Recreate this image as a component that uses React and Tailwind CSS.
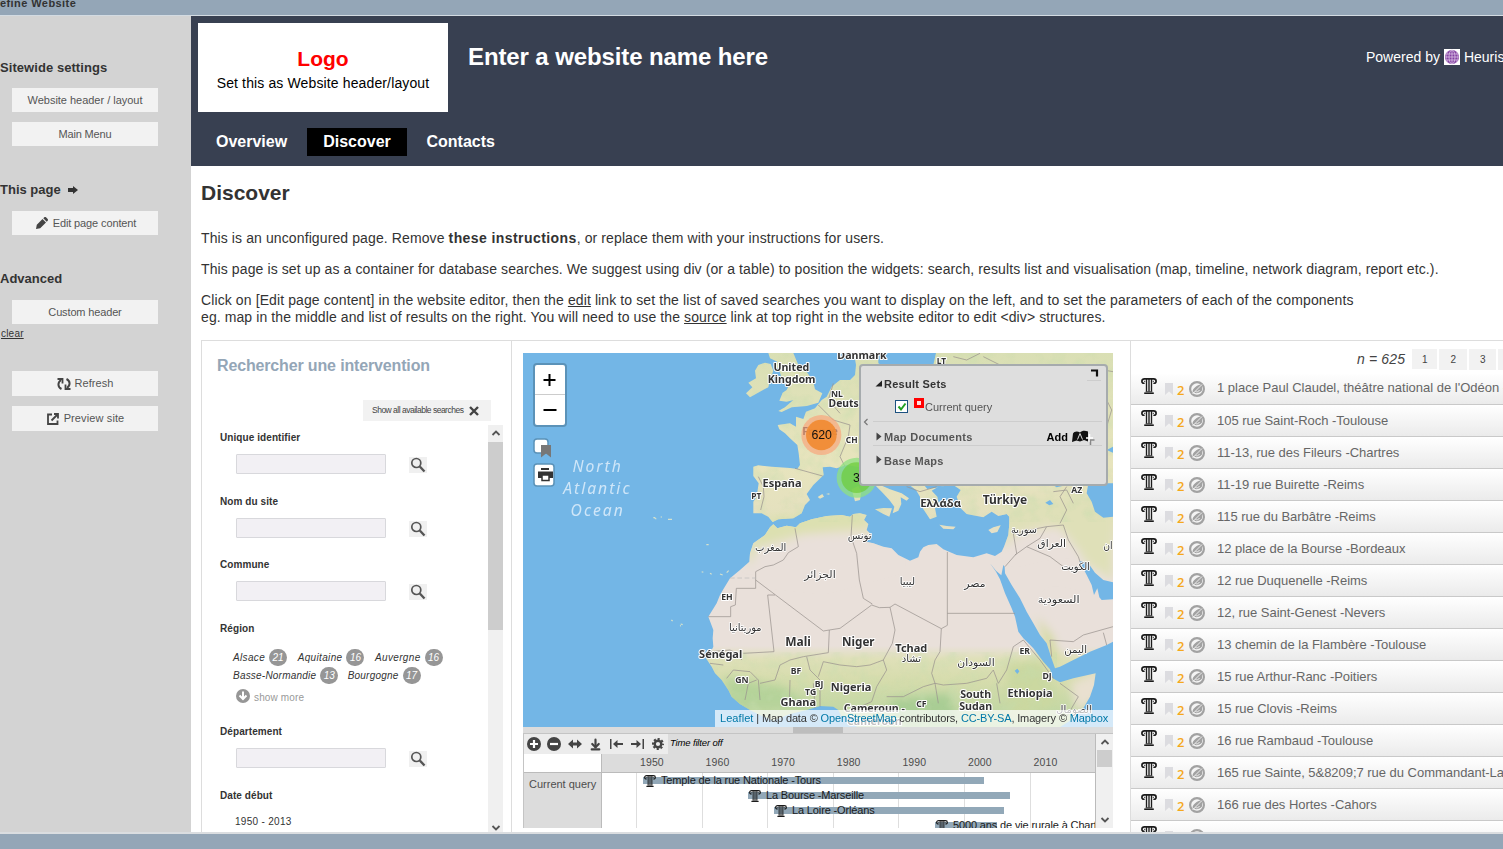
import React from "react";
import { LuArrowDownToLine } from "react-icons/lu";

/* ---------- icons ---------- */

function ColumnIcon({ className = "" }) {
  return (
    <svg viewBox="0 0 16 16" className={className} fill="none" stroke="#1c1c1c">
      <path d="M3.500 5C2.200 5.700.9 4.800.9 3.300.9 1.700 2 .9 3.400.9H12.600c1.400 0 2.500.8 2.500 2.400 0 1.500-1.300 2.400-2.600 1.700" strokeWidth="1.700" />
      <path d="M3.300 3.300h.9M11.800 3.300h.9" strokeWidth="1.200" />
      <path d="M5.500 1v12.500M8 1v12.500M10.500 1v12.500" strokeWidth="1.350" />
      <path d="M3.200 15.200h9.600" strokeWidth="1.600" />
      <path d="M4.700 13.700h6.600" strokeWidth=".8" />
    </svg>
  );
}

function SearchIcon() {
  return (
    <svg viewBox="0 0 16 16" className="h-4 w-4" fill="none" stroke="#555">
      <circle cx="6.300" cy="6" r="4.500" strokeWidth="1.700" />
      <path d="M9.800 9.500l4.700 5" strokeWidth="2.400" />
    </svg>
  );
}

function Pencil() {
  return (
    <svg viewBox="0 0 12 12" className="h-3 w-3" fill="#444">
      <path d="M0 12l.8-4.200L6.500 2l3.500 3.500-5.800 5.700zM7.300 1.200L8.300.3c.5-.4 1.200-.4 1.700 0l1.700 1.700c.4.5.4 1.200 0 1.700l-1 1z" />
    </svg>
  );
}

function RefreshIcon() {
  return (
    <svg viewBox="0 0 14 12" className="h-3 w-3.5" fill="none" stroke="#444" strokeWidth="2">
      <path d="M4.500 11C.5 9 .5 4.500 4 2" />
      <path d="M.5 1h5v4.500" strokeWidth="1.800" />
      <path d="M9.500 1c4 2 4 6.500.5 9" />
      <path d="M13.500 11h-5V6.500" strokeWidth="1.800" />
    </svg>
  );
}

function ExternalIcon() {
  return (
    <svg viewBox="0 0 12 12" className="h-3 w-3" fill="none" stroke="#444" strokeWidth="1.800">
      <path d="M5 1.500H1V11h9.500V7.500" />
      <path d="M4.500 7.500L10 2M7 1h4v4.500" />
    </svg>
  );
}

function Chevron({ up }) {
  return (
    <svg viewBox="0 0 10 8" className="h-2 w-2.5" fill="none" stroke="#555" strokeWidth="1.800">
      <path d={up ? "M1.500 6L5 2.500 8.500 6" : "M1.500 2L5 5.500 8.500 2"} />
    </svg>
  );
}

function HiddenIcon() {
  return (
    <svg viewBox="0 0 16 16" className="h-4 w-4">
      <circle cx="8" cy="8" r="6.900" fill="#f4f4f4" stroke="#a2a2a2" strokeWidth="2.200" />
      <path d="M3.500 10.500C4 7 8 4 12 3.500l1 1.500v4.500c-2 2.500-6 3.500-8 2z" fill="#a2a2a2" />
      <path d="M3.500 13L13 3.500" stroke="#f4f4f4" strokeWidth=".9" />
      <path d="M6.500 10.500c1.500.8 3 .3 4-1.500" stroke="#f4f4f4" strokeWidth=".9" fill="none" />
    </svg>
  );
}

function Globe() {
  return (
    <svg viewBox="0 0 16 16" className="h-4 w-4 shrink-0 bg-white">
      <circle cx="8" cy="8" r="7" fill="#8340a2" />
      <g fill="none" stroke="#dcc4e6" strokeWidth=".8">
        <ellipse cx="8" cy="8" rx="3" ry="7" />
        <path d="M8 1v14M1.500 5h13M1 8h14M1.500 11h13" />
        <path d="M4 2.500C2 6 2 10 4 13.500M12 2.500c2 3.500 2 7.500 0 11" strokeWidth=".5" />
      </g>
    </svg>
  );
}

/* ---------- sidebar ---------- */

function SideButton({ children, className = "" }) {
  return (
    <div className={"ml-3 flex w-[146px] items-center justify-center bg-[#f2f2f2] text-[#555] " + className}>
      {children}
    </div>
  );
}

function Sidebar() {
  return (
    <aside className="h-[816px] w-[191px] shrink-0 bg-[#d3d3d3] text-[11px] tracking-[-0.020px]">
      <h3 className="pt-[43px] text-[13px] leading-[17px] font-bold tracking-[0.060px] text-[#333]">Sitewide settings</h3>
      <SideButton className="mt-3 h-6">Website header / layout</SideButton>
      <SideButton className="mt-2.5 h-6 tracking-[-0.160px]">Main Menu</SideButton>
      <h3 className="mt-[35px] flex items-center gap-[7px] text-[13px] leading-[17px] font-bold tracking-[0] text-[#333]">
        This page
        <svg viewBox="0 0 10 8" className="h-2 w-2.5" fill="#333"><path d="M0 2h5V0l5 4-5 4V6H0z" /></svg>
      </h3>
      <SideButton className="mt-[13px] h-6 gap-[5px] pl-0.5 tracking-[-0.120px]"><Pencil />Edit page content</SideButton>
      <h3 className="mt-[35px] text-[13px] leading-[17px] font-bold tracking-[0.020px] text-[#333]">Advanced</h3>
      <SideButton className="mt-[13px] h-6 tracking-[-0.150px]">Custom header</SideButton>
      <div className="mt-1 ml-px text-[10px] leading-3 tracking-[0.200px] text-[#333] underline">clear</div>
      <SideButton className="mt-[31px] h-[25px] gap-1 tracking-[0.060px]"><RefreshIcon />Refresh</SideButton>
      <SideButton className="mt-2.5 h-[25px] gap-[5px] pl-px tracking-[0.120px]"><ExternalIcon />Preview site</SideButton>
    </aside>
  );
}

/* ---------- header ---------- */

function Header() {
  return (
    <header className="h-[150px] bg-[#384051] pl-[7px] text-white">
      <div className="flex pt-[7px]">
        <div className="flex h-[89px] w-[250px] shrink-0 flex-col items-center bg-white">
          <div className="mt-[22px] text-[21px] leading-7 font-bold text-[#f00]">Logo</div>
          <div className="text-[14px] leading-5 tracking-[0.130px] text-black">Set this as Website header/layout</div>
        </div>
        <div className="mt-[19px] ml-5 w-[898px] shrink-0 text-[24px] leading-[30px] font-bold tracking-[-0.110px]">Enter a website name here</div>
        <div className="mt-[26px] flex h-4 shrink-0 items-center gap-1 text-[14px] whitespace-nowrap">Powered by <Globe /> Heurist</div>
      </div>
      <nav className="mt-4 flex h-7 text-[16px] leading-7 font-bold">
        <div className="w-[109px] pl-[18px]">Overview</div>
        <div className="w-[100px] bg-black text-center">Discover</div>
        <div className="pl-[19.500px]">Contacts</div>
      </nav>
    </header>
  );
}

/* ---------- search form ---------- */

function Field({ label }) {
  return (
    <div className="h-[63.700px]">
      <div className="text-[10px] leading-3 font-bold tracking-[0.080px] text-[#333]">{label}</div>
      <div className="flex pt-[10px] pl-4">
        <div className="h-5 w-[150px] rounded-[1px] border border-[#d8d8dc] bg-[#f2f0f4]" />
        <div className="mt-[3px] ml-[23px] flex h-4 w-[18px] items-center justify-center bg-[#f0f0f0]"><SearchIcon /></div>
      </div>
    </div>
  );
}

function Tag({ name, count }) {
  return (
    <span className="flex items-center gap-1">
      {name}
      <span className="flex h-[17px] w-[18px] items-center justify-center rounded-full bg-[#969696] tracking-normal text-white">{count}</span>
    </span>
  );
}

function SearchPanel() {
  return (
    <section className="flex h-[492px] w-[310px] shrink-0 flex-col overflow-hidden border-t border-l border-[#ddd]">
      <h2 className="pt-[15px] pl-[15px] text-[16px] leading-[19px] font-bold tracking-[-0.150px] text-[#94a6b7]">Rechercher une intervention</h2>
      <div className="mt-[25px] ml-[161px] flex h-[21px] w-32 items-center gap-[6px] bg-[#f2f2f2] pl-[9px] text-[8.500px] tracking-[-0.500px] whitespace-nowrap text-[#444]">
        Show all available searches
        <svg viewBox="0 0 10 10" className="h-2.5 w-2.5 shrink-0" stroke="#444" strokeWidth="2.400"><path d="M1 1l8 8M9 1L1 9" /></svg>
      </div>
      <div className="mt-1 flex h-[407px]">
        <div className="w-[286px] shrink-0 overflow-hidden pt-[7px] pl-[18px] text-[10px] text-[#333]">
          <Field label="Unique identifier" />
          <Field label="Nom du site" />
          <Field label="Commune" />
          <div className="h-[103px]">
            <div className="leading-3 font-bold tracking-[0.080px]">Région</div>
            <div className="mt-3.5 ml-[13px] flex h-[17px] gap-[10.500px] tracking-[0.350px] italic">
              <Tag name="Alsace" count="21" />
              <Tag name="Aquitaine" count="16" />
              <Tag name="Auvergne" count="16" />
            </div>
            <div className="mt-px ml-[13px] flex h-[17px] gap-[9.500px] tracking-[0.210px] italic">
              <Tag name="Basse-Normandie" count="13" />
              <Tag name="Bourgogne" count="17" />
            </div>
            <div className="mt-[3px] ml-4 flex items-center gap-1 tracking-[0.150px] text-[#999]">
              <svg viewBox="0 0 14 14" className="h-3.5 w-3.5"><circle cx="7" cy="7" r="7" fill="#969696" /><path d="M7 2.500v7M3.500 6.500L7 10l3.500-3.500" fill="none" stroke="#fff" strokeWidth="2" /></svg>
              <span className="pt-[5px] leading-3">show more</span>
            </div>
          </div>
          <Field label="Département" />
          <div className="leading-3 font-bold tracking-[0.080px]">Date début</div>
          <div className="mt-3.5 ml-[15px] leading-3 tracking-[0.300px]">1950 - 2013</div>
        </div>
        <div className="flex w-[15px] flex-col items-center bg-[#f0f0f0]">
          <div className="flex h-[17px] items-center"><Chevron up /></div>
          <div className="h-[190px] w-full bg-[#cdcdcd]" />
          <div className="mt-[194px] h-2"><Chevron /></div>
        </div>
      </div>
    </section>
  );
}

/* ---------- map ---------- */

const LAND = [
  // Africa and Arabia
  "M250 523L262 535 290 527 318 532 330 520 365 508 410 498 455 495 480 500 490 492 510 490 530 495 522 510 535 522 530 540 545 555 528 575 550 580 580 590 605 595 625 615 660 632 685 622 690 605 700 592 715 585 740 582 760 598 800 615 850 622 890 610 915 618 935 605 942 590 955 555 958 520 958 498 1269 450V1131H500L490 1100 455 1100 445 1080 430 1070 390 1068 350 1080 300 1092 250 1112 210 1095 180 1080 150 1062 125 1040 115 1020 95 990 75 970 65 950 48 925 60 910 70 890 68 865 70 840 55 800 80 760 90 735 100 718 120 685 150 660 178 635 180 610 190 580 225 555 240 532Z",
  // Europe and Anatolia
  "M190 350L205 346 245 350 300 354 322 357 330 345 326 310 322 285 300 265 285 250 268 238 263 225 300 220 318 230 318 200 340 207 348 185 375 175 395 150 410 140 425 110 450 90 480 90 495 75 498 45 492 9H565V40L600 60 730 45 738 9H1269V500L960 502 950 492 925 498 905 485 880 502 850 496 830 492 812 475 800 440 812 420 790 405 745 410 725 422 742 440 748 470 735 475 740 500 720 508 705 485 690 462 690 440 678 420 655 403 640 380H540L565 403 600 418 635 430 657 445 650 452 632 442 634 462 625 482 608 490 613 470 598 450 575 425 545 395 530 355 500 350 470 345 440 355 420 350 398 352 401 375 370 405 350 432 360 450 345 465 335 490 310 505 265 508 248 516 235 500 215 490 190 490 190 455 200 440 206 400 190 378Z",
  // Great Britain, Ireland
  "M235 9L240 25 262 35 250 42 268 60 275 85 300 100 290 120 278 128 268 152 290 155 310 150 285 172 265 183 275 186 305 172 350 168 385 158 397 130 375 118 370 95 350 65 325 45 310 9Z",
  "M205 45L225 38 242 42 250 62 240 90 235 112 215 122 180 142 168 130 187 112 175 98 198 85 195 62Z",
  // Mediterranean islands
  "M555 478L580 474 606 475 598 500 580 492Z",
  "M485 418L505 408 514 425 510 450 495 454Z",
  "M748 524L770 528 797 530 790 538 760 536Z",
  "M895 540L910 532 932 526 922 546 905 550Z",
  "M383 441L397 432 402 440 390 446ZM408 432L418 430 418 434Z",
];

const WATER = [
  "M900 640L918 662 934 676 940 645 944 650 945 670 965 705 990 745 1010 785 1030 820 1050 855 1070 880 1083 920 1095 955 1110 950 1150 930 1200 905 1250 885 1269 875V1131H1110L1140 1112 1180 1075 1200 1040 1212 1005 1217 970 1150 985 1110 997 1088 985 1080 958 1060 935 1030 895 1000 865 985 845 975 800 965 775 945 730 930 688 918 665Z",
  "M1168 633L1195 640 1215 668 1240 690 1269 697V748L1235 750 1228 742 1222 715 1212 735 1205 705 1190 675Z",
  "M1195 400L1190 430 1205 455 1215 485 1240 503 1269 500V400Z",
  "M700 403L712 417 748 412 790 403ZM1068 392L1100 412 1140 403Z",
  "M1250 300L1269 290V308ZM1066 458L1080 450 1090 462 1078 466Z",
  "M974 962l8-6 6 8-6 8z",
];

const BORDERS =
  "M315 535L325 590 295 608 280 630 250 645 225 650 197 665V715H139L136 765 122 770V800H55M197 690L400 843 418 840 450 835 545 765 568 773 600 772 615 762 754 836 772 826V606M772 790H975M487 495L483 560 500 610 508 690 520 745 547 762M233 735L255 735M233 735L252 905 160 910M418 840L415 908 340 920 300 930 270 945 255 990 210 1000M600 772L615 840 607 880 580 930 540 945 500 950 450 945 400 935 385 980M580 930L590 960 560 1010 545 1055 500 1075M754 836L750 905 735 930 725 970 735 1000 700 1010 640 1040 590 1040M735 1000L760 1005 830 1000 890 985 910 960 925 1000 950 960 970 890 1000 870M1000 870L1050 930 1090 985M1110 1000L1165 1040 1130 1100M1085 920L1080 870 1150 875 1180 855 1269 830M1240 848L1250 885M300 990L298 1070M370 1000L375 1075M350 920L360 960 390 990 390 1070M60 905L120 900 150 915 155 930M60 940L100 945M110 985L130 960 180 965 205 990 210 1050M165 1050L175 1000 200 990M735 1000L745 1060M920 1000L930 1060M975 615L1010 590 1050 565 1070 530 1120 525M1010 590L1080 620 1120 650 1170 655M945 650L980 610 970 550 1070 530M1120 525L1135 570 1165 620 1170 635M1130 410L1110 440 1130 480 1110 520M1090 425L1130 420 1150 460M315 355L398 378M205 380L220 410 222 440 212 480M385 165L430 210 480 225 475 260 450 320 465 350M430 100L415 150 450 190M650 410L690 425 740 410M790 20L830 30 870 10M880 20L940 50 1000 60M1250 150L1265 180 1250 230M1195 70L1240 60 1269 65";

const LABELS = [
  ["Danmark", 516, 28, 32],
  ["United", 304, 62, 32],
  ["Kingdom", 305, 99, 32],
  ["NL", 441, 141, 26],
  ["Deuts", 461, 170, 31],
  ["LT", 754, 42, 25],
  ["CH", 485, 278, 25],
  ["España", 276, 412, 33],
  ["PT", 199, 446, 25],
  ["Ελλάδα", 752, 471, 34],
  ["Türkiye", 945, 463, 36],
  ["AZ", 1160, 428, 26],
  ["EH", 111, 751, 26],
  ["Mali", 324, 887, 36],
  ["Niger", 505, 887, 35],
  ["Tchad", 664, 905, 33],
  ["Sénégal", 92, 925, 33],
  ["BF", 318, 973, 26],
  ["GN", 156, 999, 26],
  ["BJ", 387, 1011, 26],
  ["TG", 362, 1035, 26],
  ["Ghana", 325, 1069, 33],
  ["Nigeria", 483, 1023, 33],
  ["CF", 694, 1071, 26],
  ["Cameroun -", 553, 1086, 32],
  ["Cameroon", 553, 1124, 32],
  ["South", 857, 1045, 32],
  ["Sudan", 857, 1080, 32],
  ["Ethiopia", 1020, 1040, 33],
  ["ER", 1004, 913, 26],
  ["DJ", 1071, 986, 26],
];

const ARABIC = [
  ["تونس", 509, 568, 72],
  ["المغرب", 242, 604, 94],
  ["الجزائر", 390, 684, 94],
  ["ليبيا", 652, 706, 46],
  ["مصر", 855, 712, 64],
  ["سورية", 1002, 548, 78],
  ["العراق", 1085, 591, 86],
  ["الكويت", 1157, 660, 86],
  ["السعودية", 1106, 760, 126],
  ["موريتانيا", 166, 843, 98],
  ["تشاد", 664, 937, 58],
  ["السودان", 858, 948, 112],
  ["اليمن", 1157, 910, 68],
  ["الصومال", 1152, 1088, 108],
  ["ان", 1254, 596, 28],
];

function MapDrawing() {
  return (
    <svg viewBox="-501 9 1770 1122" className="block h-[374px] w-[590px]">
      <defs>
        <linearGradient id="terrain" gradientUnits="userSpaceOnUse" x1="0" y1="0" x2="0" y2="1131">
          <stop offset="0" stopColor="#d9dfb4" />
          <stop offset=".3" stopColor="#e7e4bd" />
          <stop offset=".46" stopColor="#e4e0bf" />
          <stop offset=".53" stopColor="#e9e0da" />
          <stop offset=".785" stopColor="#e9e0da" />
          <stop offset=".82" stopColor="#dfe0b8" />
          <stop offset=".88" stopColor="#d5dcac" />
          <stop offset="1" stopColor="#b8d49f" />
        </linearGradient>
        <clipPath id="land">{LAND.map((d) => <path key={d} d={d} />)}</clipPath>
        <filter id="soft" x="-30%" y="-30%" width="160%" height="160%"><feGaussianBlur stdDeviation="14" /></filter>
        <filter id="relief" x="0" y="0" width="100%" height="100%">
          <feTurbulence type="fractalNoise" baseFrequency=".022" numOctaves="3" seed="4" />
          <feColorMatrix values="0 0 0 0 .56 0 0 0 0 .72 0 0 0 0 .42 2.600 0 0 0 -1.150" />
        </filter>
      </defs>
      <rect x="-501" y="9" width="1770" height="1122" fill="#73b6e6" />
      <g clipPath="url(#land)">
        <rect x="0" y="0" width="1269" height="1131" fill="url(#terrain)" />
        <g filter="url(#soft)">
          <path d="M200 590L330 550 540 525 520 480 230 500 170 600 180 650Z" fill="#dce0b0" />
          <path d="M940 600L960 560 990 540 1080 510 1140 560 1190 640 1269 690V440H940Z" fill="#dfe0b8" />
          <path d="M980 560L1110 535 1140 590 1050 600 970 620Z" fill="#e9e0da" />
          <path d="M330 560L520 555 620 640 400 700 220 680Z" fill="#e9e0da" />
          <path d="M950 940L1060 930 1080 1000 1100 1060 960 1120Z" fill="#cbd8a0" />
          <path d="M600 1050L780 1030 800 1131H600Z" fill="#a9cd94" />
          <path d="M100 980L280 1010 380 1080 130 1080Z" fill="#b5d39a" />
          <path d="M1140 1000L1230 960 1230 1040 1160 1090Z" fill="#e9e0d0" />
          <path d="M1090 740L1240 770 1269 870 1120 900 1050 800Z" fill="#e9e0da" />
          <path d="M1040 800L1090 860 1110 940 1080 930Z" fill="#d3da9c" />
        </g>
        <g opacity=".4">
          <rect x="140" y="9" width="1129" height="505" filter="url(#relief)" />
          <rect x="40" y="905" width="1060" height="226" filter="url(#relief)" />
        </g>
      </g>
      {WATER.map((d) => <path key={d} d={d} fill="#73b6e6" />)}
      <path d={BORDERS} fill="none" stroke="#9a938f" strokeWidth="2.200" strokeLinejoin="round" />
      <path d="M120 684H197" stroke="#bbb" strokeWidth="2" strokeDasharray="14 8" />
      <path d="M110 668l6-6M90 672l8 3M60 670l5 3M35 665l5 2M49 584h7M-110 503h6M-106 505l5 2M-88 501h4M-66 508h12M-56 810l4 3M-30 828l3-1M-28 822l6 2" stroke="#d6e2cc" strokeWidth="3.500" />
      <g fontFamily="'Noto Sans', sans-serif" fontStyle="italic" fontSize="47" letterSpacing="6" fill="#cfe6f8" textAnchor="middle">
        <text x="-277" y="366">North</text>
        <text x="-278" y="432">Atlantic</text>
        <text x="-277" y="498">Ocean</text>
      </g>
      <g fontFamily="'Noto Sans', sans-serif" fontWeight="700" fill="#333" stroke="#fff" strokeWidth="6" strokeLinejoin="round" paintOrder="stroke" textAnchor="middle">
        {LABELS.map(([t, x, y, s]) => <text key={t} x={x} y={y} fontSize={s}>{t}</text>)}
      </g>
      <g fontFamily="'DejaVu Sans', sans-serif" fontSize="31" fill="#333" stroke="#fff" strokeWidth="5" strokeLinejoin="round" paintOrder="stroke" textAnchor="middle">
        {ARABIC.map(([t, x, y, w]) => <text key={t} x={x} y={y} textLength={w} lengthAdjust="spacingAndGlyphs">{t}</text>)}
      </g>
      <text x="390" y="254" fontFamily="'Noto Sans', sans-serif" fontWeight="700" fontSize="32" fill="#555" textAnchor="middle">France</text>
      <circle cx="394" cy="255" r="60" fill="#fd9c73" fillOpacity=".6" />
      <circle cx="394" cy="255" r="46" fill="#f18a30" fillOpacity=".9" />
      <circle cx="500" cy="383" r="60" fill="#8fe080" fillOpacity=".75" />
      <circle cx="500" cy="383" r="46" fill="#6ecc39" fillOpacity=".7" />
      <g fontFamily="'Liberation Sans', sans-serif" fontSize="37" fill="#111" textAnchor="middle">
        <text x="395" y="267">620</text>
        <text x="499" y="396">3</text>
      </g>
    </svg>
  );
}

function LayerPanel() {
  return (
    <div className="absolute top-[11px] left-[336px] h-[122px] w-[249px] rounded-[4px] border-2 border-[#8f9598]/70 bg-[#dedede] text-[11px] text-[#555]">
      <div className="relative h-full w-full">
        <svg viewBox="0 0 245 118" className="absolute inset-0 h-[118px] w-[245px]" fill="none">
          <path d="M230 4.500h6v6" stroke="#111" strokeWidth="2.200" />
          <path d="M226 14.500h14M12 55.500h229M12 79.500h229" stroke="#cdcdcd" />
          <path d="M21 14.500v6h-6.500z" fill="#222" />
          <path d="M15.500 66.500l5 4-5 4zM15.500 89.500l5 4-5 4z" fill="#444" />
          <path d="M6.500 53l-3 3 3 3" stroke="#777" strokeWidth="1.200" />
          <rect x="34.500" y="34.500" width="12" height="12" fill="#fff" stroke="#1c5180" />
          <path d="M37.500 40.500l2.500 3 4.500-6" stroke="#21a121" strokeWidth="2" />
          <rect x="54.500" y="33.500" width="7" height="7" fill="#ffe0e0" stroke="#f00" strokeWidth="3" />
          <path d="M212 67.500c1-2 4-3 7-1 2-2 5-2 8-1v10l-4-1.500-4 1.500-3.500-1-4.500 1.500z" fill="#111" />
          <path d="M216.500 73.500l2.500-6 2.500 6" stroke="#ddd" />
          <path d="M228.500 68v8M225 72h7" stroke="#fff" strokeWidth="1.500" />
          <path d="M229.500 79v-5h4" stroke="#888" strokeWidth="1.500" />
        </svg>
        <div className="flex flex-col pl-[23px] font-bold">
          <div className="mt-[11px] leading-[14px] tracking-[0.250px] text-[#333]">Result Sets</div>
          <div className="mt-[9px] ml-[41px] leading-[14px] font-normal tracking-[0]">Current query</div>
          <div className="mt-4 flex w-[184px] justify-between leading-[14px] tracking-[0.280px]">Map Documents<span className="tracking-normal text-black">Add</span></div>
          <div className="mt-[10px] leading-[14px] tracking-[0.240px]">Base Maps</div>
        </div>
      </div>
    </div>
  );
}

function MapView() {
  return (
    <div className="relative h-[374px] w-[590px] overflow-hidden">
      <MapDrawing />
      <div className="absolute top-[10px] left-[10px] flex h-[64px] w-[34px] flex-col rounded-[4px] border-2 border-[#5b92b8] bg-white text-center">
        <svg viewBox="0 0 30 60" className="h-[60px] w-[30px]" stroke="#000" strokeWidth="2"><path d="M8.500 15h12M14.500 9v12M8.500 45h13" /><path d="M0 29.500h30" stroke="#ccc" strokeWidth="1" /></svg>
      </div>
      <svg viewBox="0 0 24 52" className="absolute top-[83px] left-[9px] h-[52px] w-6">
        <rect x="2" y="3" width="14" height="14" rx="3" fill="#fff" stroke="#5b92b8" strokeWidth="1.500" />
        <path d="M9 9h10v12.500l-5-4-5 4z" fill="#777" />
        <rect x="2" y="28" width="20" height="22" rx="3" fill="#fff" stroke="#5b92b8" strokeWidth="1.500" />
        <path d="M9 32h8v2H9zM6 35.500h15v6.500H6z" fill="#333" />
        <rect x="10" y="39" width="7" height="5.500" fill="#fff" stroke="#333" strokeWidth="1.500" />
      </svg>
      <LayerPanel />
      <div className="absolute right-0 bottom-0 h-[17px] w-[398px] bg-white/70 pl-[5px] text-[11px] leading-[17px] tracking-[-0.140px] whitespace-nowrap text-[#333]">
        <span className="tracking-[0.060px] text-[#0078a8]">Leaflet</span> | Map data © <span className="text-[#0078a8]">OpenStreetMap</span> contributors, <span className="text-[#0078a8]">CC-BY-SA</span>, Imagery © <span className="text-[#0078a8]">Mapbox</span>
      </div>
    </div>
  );
}

/* ---------- timeline ---------- */

const EVENTS = [
  { left: 41, width: 341, top: 4, text: "Temple de la rue Nationale -Tours" },
  { left: 146, width: 262, top: 19, text: "La Bourse -Marseille" },
  { left: 172, width: 230, top: 34, text: "La Loire -Orléans" },
  { left: 333, width: 62, top: 49, text: "5000 ans de vie rurale à Chartres" },
];
const YEARS = [1950, 1960, 1970, 1980, 1990, 2000, 2010];

function Tool({ children, className = "" }) {
  return <div className={"flex h-5 items-center justify-center bg-[#ececec] " + className}>{children}</div>;
}

function Timeline() {
  return (
    <div className="w-[590px]">
      <div className="h-[6px] bg-[#dcdcdc] pl-[270px]"><div className="h-full w-[50px] bg-[#bdbdbd]" /></div>
      <div className="flex h-[95px] overflow-hidden border-t border-l border-[#c4c4c4]">
        <div className="w-[572px] shrink-0 border-r border-[#bbb]">
          <div className="flex h-5 items-center bg-[#dcdcdc]">
            <Tool className="w-5"><svg viewBox="0 0 14 14" className="h-3.5 w-3.5"><circle cx="7" cy="7" r="7" fill="#444" /><path d="M7 3v8M3 7h8" stroke="#fff" strokeWidth="2.200" /></svg></Tool>
            <Tool className="w-5"><svg viewBox="0 0 14 14" className="h-3.5 w-3.5"><circle cx="7" cy="7" r="7" fill="#444" /><path d="M3 7h8" stroke="#fff" strokeWidth="2.200" /></svg></Tool>
            <Tool className="w-[21px]"><svg viewBox="0 0 14 10" className="h-2.5 w-3.5" fill="#444"><path d="M0 5l5-4.500v3h4v-3L14 5 9 9.500v-3H5v3z" /></svg></Tool>
            <Tool className="w-[21px]"><LuArrowDownToLine className="h-[13px] w-[13px] text-[#444]" strokeWidth={4} /></Tool>
            <Tool className="w-[21px]"><svg viewBox="0 0 13 10" className="h-2.5 w-[13px]" fill="#444"><path d="M0 0h1.500v10H0zM3 5l4.500-4v3H13v2H7.500v3z" /></svg></Tool>
            <Tool className="w-[21px]"><svg viewBox="0 0 13 10" className="h-2.5 w-[13px]" fill="#444"><path d="M13 0h-1.500v10H13zM10 5L5.500 1v3H0v2h5.500v3z" /></svg></Tool>
            <Tool className="w-5">
              <svg viewBox="0 0 12 12" className="h-3 w-3" fill="none" stroke="#444"><circle cx="6" cy="6" r="3.300" strokeWidth="2.400" /><circle cx="6" cy="6" r="5" strokeWidth="2" strokeDasharray="2.100 1.827" strokeDashoffset="1" /></svg>
            </Tool>
            <span className="ml-[2px] pb-[2px] text-[9.500px] tracking-[-0.150px] text-black italic">Time filter off</span>
          </div>
          <div className="flex h-[19px] border-b border-[#bbb] bg-[#dcdcdc]">
            <div className="w-[78px] shrink-0 border-r border-[#bbb] bg-white" />
            <div className="flex pl-[38px] text-[10.500px] leading-[17px] tracking-[0.100px] text-[#4d4d4d]">
              {YEARS.map((y) => <div key={y} className="w-[65.600px] shrink-0">{y}</div>)}
            </div>
          </div>
          <div className="flex h-[56px]">
            <div className="w-[78px] shrink-0 border-r border-[#bbb] bg-[#dcdcdc] pt-1 pl-[5px] text-[11px] leading-[15px] text-[#4d4d4d]">Current query</div>
            <div className="relative h-[56px] w-[493px] overflow-hidden bg-white">
              <div className="flex h-full pl-[34px]">
                {YEARS.map((y) => <div key={y} className="w-[65.600px] shrink-0 border-l border-[#dedede]" />)}
              </div>
              {EVENTS.map((e) => (
                <div key={e.text} className="absolute flex h-[7px] items-center bg-[#92a8b8] pl-px text-[11px] tracking-[-0.140px] whitespace-nowrap text-[#1a1a1a]" style={{ left: e.left, width: e.width, top: e.top }}>
                  <ColumnIcon className="mt-px h-3 w-3 shrink-0" />
                  <span className="ml-[5px]">{e.text}</span>
                </div>
              ))}
            </div>
          </div>
        </div>
        <div className="flex w-[17px] flex-col items-center bg-[#f0f0f0]">
          <div className="flex h-4 items-center"><Chevron up /></div>
          <div className="h-[17px] w-[15px] bg-[#cdcdcd]" />
          <div className="mt-[49px]"><Chevron /></div>
        </div>
      </div>
    </div>
  );
}

/* ---------- results ---------- */

const RESULTS = [
  "1 place Paul Claudel, théâtre national de l'Odéon - Paris",
  "105 rue Saint-Roch -Toulouse",
  "11-13, rue des Fileurs -Chartres",
  "11-19 rue Buirette -Reims",
  "115 rue du Barbâtre -Reims",
  "12 place de la Bourse -Bordeaux",
  "12 rue Duquenelle -Reims",
  "12, rue Saint-Genest -Nevers",
  "13 chemin de la Flambère -Toulouse",
  "15 rue Arthur-Ranc -Poitiers",
  "15 rue Clovis -Reims",
  "16 rue Rambaud -Toulouse",
  "165 rue Sainte, 5&8209;7 rue du Commandant-Lamy",
  "166 rue des Hortes -Cahors",
  "17-19 rue Maurice \"Hubert - 2-8 rue Marcoule -Reims",
];

function Results() {
  return (
    <section className="h-[492px] w-[373px] shrink-0 overflow-hidden border-t border-l border-[#ddd]">
      <div className="flex h-8 items-center gap-[2px] pt-[4px] pl-[226px] text-[10px] text-[#444]">
        <span className="mr-[5px] text-[14px] tracking-[0.150px] whitespace-nowrap italic">n = 625</span>
        <span className="flex h-5 w-[25px] shrink-0 items-center justify-center bg-[#f2f2f2]">1</span>
        <span className="flex h-[21px] w-[28px] shrink-0 items-center justify-center bg-[#f2f2f2]">2</span>
        <span className="flex h-[21px] w-[27px] shrink-0 items-center justify-center bg-[#f2f2f2]">3</span>
        <span className="flex h-[21px] w-[26px] shrink-0 items-center justify-center bg-[#f2f2f2]">4</span>
      </div>
      {RESULTS.map((r, i) => (
        <div key={r} className="flex h-8 w-[420px] border-b border-[#c9c9c9] bg-linear-to-b from-white to-[#ebebeb] pl-[10px] text-[13px] whitespace-nowrap text-[#666]">
          <ColumnIcon className="mt-[5px] h-4 w-4 shrink-0" />
          <svg viewBox="0 0 8 12" className="mt-[10px] ml-2 h-3 w-2 shrink-0"><path d="M0 0h8v12L4 8.500 0 12z" fill="#dcdce0" /></svg>
          <span className="mt-[9px] ml-1 w-2 shrink-0 font-['Open_Sans'] text-[13px] leading-4 font-semibold text-[#f5a81c]">2</span>
          <span className="mt-2 ml-1 shrink-0"><HiddenIcon /></span>
          <span className={i === 0 ? "mt-[7px] ml-3 leading-4" : "mt-[8px] ml-3 leading-4 tracking-[-0.030px]"}>{r}</span>
        </div>
      ))}
    </section>
  );
}

/* ---------- page ---------- */

export default function App() {
  return (
    <div className="flex h-[849px] w-[1503px] flex-col overflow-hidden bg-[#94a6b7] font-['Liberation_Sans',Arial,sans-serif]">
      <div className="h-4 shrink-0 overflow-hidden border-b border-[#d3dbe2] text-[11px] leading-3 font-bold tracking-[0.420px] text-[#333]">
        <div className="-mt-[3px]">efine Website</div>
      </div>
      <div className="flex h-[816px] shrink-0">
        <Sidebar />
        <main className="h-[816px] w-[1312px] overflow-hidden bg-white">
          <Header />
          <div className="h-[174px] pl-[10px] text-[14px] leading-[17px] tracking-[0.107px] text-[#333]">
            <h1 className="pt-[14px] text-[21px] leading-[26px] font-bold tracking-normal">Discover</h1>
            <p className="mt-[24px] whitespace-nowrap">This is an unconfigured page. Remove <b className="tracking-[0.420px]">these instructions</b>, or replace them with your instructions for users.</p>
            <p className="mt-[14px] whitespace-nowrap">This page is set up as a container for database searches. We suggest using div (or a table) to position the widgets: search, results list and visualisation (map, timeline, network diagram, report etc.).</p>
            <p className="mt-[14px] whitespace-nowrap">Click on [Edit page content] in the website editor, then the <u>edit</u> link to set the list of saved searches you want to display on the left, and to set the parameters of each of the components<br /><span className="tracking-[0.093px]">eg. map in the middle and list of results on the right. You will need to use the <u>source</u> link at top right in the website editor to edit &lt;div&gt; structures.</span></p>
          </div>
          <div className="flex pl-[10px]">
            <SearchPanel />
            <section className="h-[492px] w-[619px] shrink-0 border-t border-l border-[#ddd] pt-3 pl-[11px]">
              <MapView />
              <Timeline />
            </section>
            <Results />
          </div>
        </main>
      </div>
      <div className="h-[2px] shrink-0 bg-[#dadde0]" />
    </div>
  );
}
